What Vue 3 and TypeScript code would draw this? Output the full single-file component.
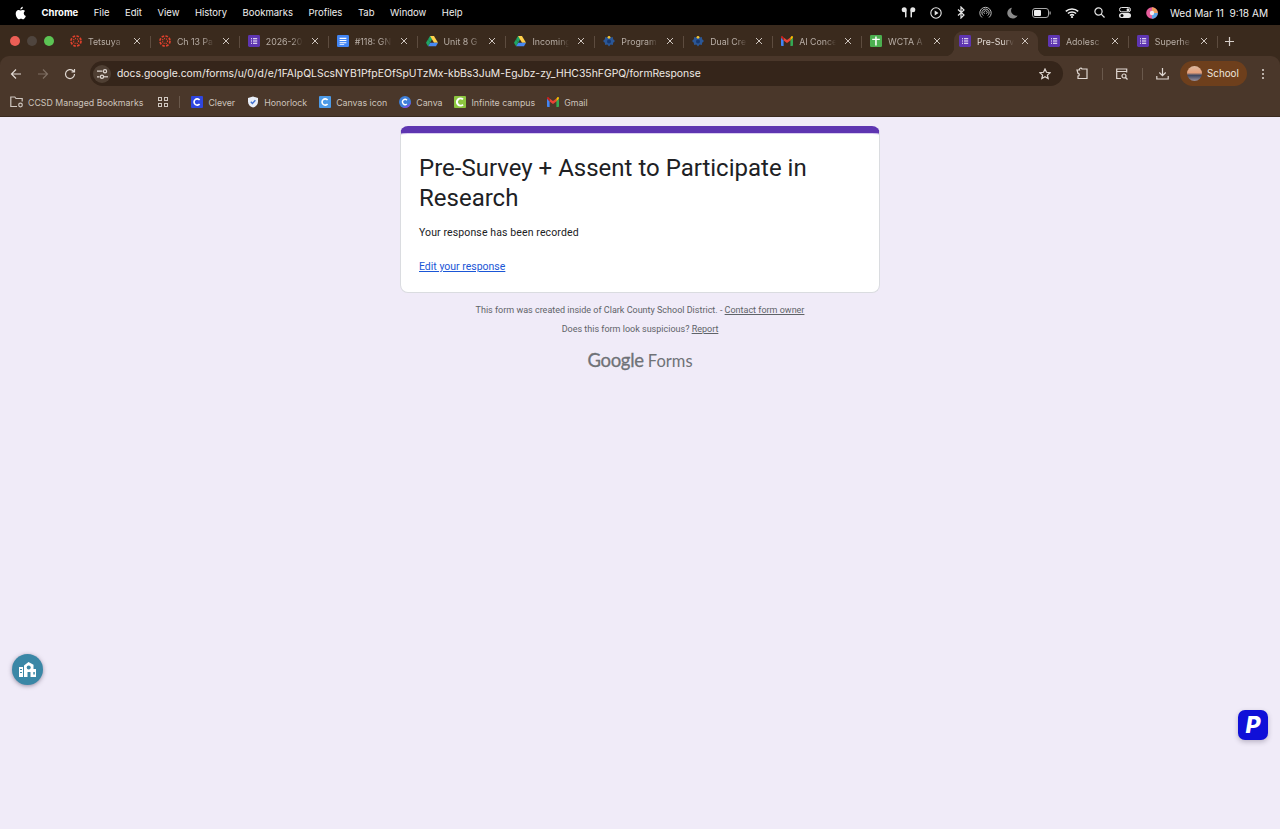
<script setup lang="ts">
interface Tab {
  title: string;
  icon: string;
  active?: boolean;
}

const menus = ['File', 'Edit', 'View', 'History', 'Bookmarks', 'Profiles', 'Tab', 'Window', 'Help'];

const tabs: Tab[] = [
  { title: 'Tetsuya', icon: 'canvas' },
  { title: 'Ch 13 Pa', icon: 'canvas' },
  { title: '2026-20', icon: 'forms' },
  { title: '#118: GN', icon: 'docs' },
  { title: 'Unit 8 G', icon: 'drive' },
  { title: 'Incoming', icon: 'drive' },
  { title: 'Program', icon: 'seal' },
  { title: 'Dual Cre', icon: 'seal' },
  { title: 'AI Conce', icon: 'gmail' },
  { title: 'WCTA A', icon: 'sheets' },
  { title: 'Pre-Surv', icon: 'forms', active: true },
  { title: 'Adolesc', icon: 'forms' },
  { title: 'Superhe', icon: 'forms' },
];

const bookmarks = [
  { title: 'Clever', icon: 'clever' },
  { title: 'Honorlock', icon: 'shield' },
  { title: 'Canvas icon', icon: 'canvasc' },
  { title: 'Canva', icon: 'canva' },
  { title: 'Infinite campus', icon: 'infinite' },
  { title: 'Gmail', icon: 'gmail' },
];
</script>

<template>
  <div class="screen">
    <svg class="sprite" aria-hidden="true">
      <symbol id="canvas" viewBox="0 0 12 12">
        <circle cx="6" cy="6" r="5" fill="none" stroke="#e0402c" stroke-width="1.7" stroke-dasharray="2.6 1.3" />
        <circle cx="6" cy="6" r="2.5" fill="none" stroke="#e0402c" stroke-width="1.3" stroke-dasharray="1.1 1" />
      </symbol>
      <symbol id="forms" viewBox="0 0 12 12">
        <rect width="12" height="12" rx="1.4" fill="#5e35b1" />
        <path d="M3 3.2h1v1H3zM5 3.2h4.2v1H5zM3 5.5h1v1H3zM5 5.5h4.2v1H5zM3 7.8h1v1H3zM5 7.8h4.2v1H5z" fill="#fff" />
      </symbol>
      <symbol id="docs" viewBox="0 0 12 12">
        <rect width="12" height="12" rx="1.2" fill="#4285f4" />
        <path d="M2.6 2.8h6.8v1.1H2.6zM2.6 5h6.8v1.1H2.6zM2.6 7.2h6.8v1.1H2.6zM2.6 9.2h4.6v.9H2.6z" fill="#fff" />
      </symbol>
      <symbol id="drive" viewBox="0 0 12 11">
        <path d="M4 .5h4L4.1 7.2 2.1 3.8z" fill="#1fa463" />
        <path d="M8 .5l4 6.8H8L4.1.5z" fill="#ffd04b" />
        <path d="M12 7.3l-2 3.4H2l2-3.4z" fill="#4688f4" />
        <path d="M0 7.3l2.1-3.5 2 3.5-2.1 3.4z" fill="#1fa463" />
      </symbol>
      <symbol id="seal" viewBox="0 0 12 12">
        <path d="M6 .8l1.6 1.6 2.2-.4.4 2.2L12 6l-1.8 1.8-.4 2.2-2.2-.4L6 11.4l-1.6-1.8-2.2.4-.4-2.2L0 6l1.8-1.8.4-2.2 2.2.4z" fill="#2b5797" />
        <circle cx="6" cy="6.500" r="2" fill="#17386e" />
        <circle cx="6" cy="2.300" r="1.400" fill="#f4c430" />
      </symbol>
      <symbol id="gmail" viewBox="0 0 12 10">
        <path d="M0 1.4v7.8c0 .4.3.8.8.8h1.8V4.6z" fill="#4285f4" />
        <path d="M9.4 4.6V10h1.8c.5 0 .8-.4.8-.8V1.4z" fill="#34a853" />
        <path d="M2.6 4.6L6 7.1l3.4-2.5V1.4L6 3.9 2.6 1.4z" fill="#ea4335" />
        <path d="M0 1.4l2.6 3.2V1.4L1.6.3C.9-.2 0 .4 0 1.4z" fill="#c5221f" />
        <path d="M12 1.4L9.4 4.6V1.4L10.4.3c.7-.5 1.6.1 1.6 1.1z" fill="#fbbc04" />
      </symbol>
      <symbol id="sheets" viewBox="0 0 12 12">
        <rect width="12" height="12" rx="1.2" fill="#4caf50" />
        <path d="M2.2 3.800h3V1.500h1.500v2.300h3.100v1.300H6.700v5.400H5.200V5.100h-3z" fill="#fff" />
      </symbol>
      <symbol id="clever" viewBox="0 0 12 12">
        <rect width="12" height="12" rx="1" fill="#2f46e0" />
        <path d="M8.6 4.1A3.1 3.1 0 1 0 8.6 7.9" fill="none" stroke="#fff" stroke-width="1.6" />
      </symbol>
      <symbol id="shield" viewBox="0 0 12 12">
        <path d="M6 .4l5 1.7v3.6c0 3-2.2 5-5 5.9-2.8-.9-5-2.900-5-5.900V2.100z" fill="#e8edf7" />
        <path d="M3.800 5.800L5.400 7.400l3-3.200" fill="none" stroke="#3d6fd1" stroke-width="1.400" />
      </symbol>
      <symbol id="canvasc" viewBox="0 0 12 12">
        <rect width="12" height="12" rx="1" fill="#4d9be8" />
        <path d="M8.600 4.100A3.100 3.100 0 1 0 8.600 7.900" fill="none" stroke="#fff" stroke-width="1.600" />
      </symbol>
      <symbol id="canva" viewBox="0 0 12 12">
        <circle cx="6" cy="6" r="6" fill="#3f7fd9" />
        <path d="M12 6a6 6 0 0 1-6 6 6 6 0 0 1-3-.8C7 11 10 9 12 6z" fill="#7d4fe0" />
        <path d="M8 4.200A2.600 2.600 0 1 0 7.800 8" fill="none" stroke="#fff" stroke-width="1.300" />
      </symbol>
      <symbol id="infinite" viewBox="0 0 12 12">
        <rect width="12" height="12" rx="1" fill="#8cc63f" />
        <path d="M9 3.400A3.600 3.600 0 1 0 9 8.600" fill="none" stroke="#fff" stroke-width="2" />
      </symbol>
    </svg>

    <header class="menubar">
      <svg class="apple" viewBox="0 0 14 16"><path d="M11.400 8.500c0-1.800 1.500-2.600 1.500-2.700-.8-1.200-2.100-1.400-2.500-1.400-1.100-.1-2.100.6-2.700.6s-1.400-.6-2.300-.6C4.300 4.400 3.200 5.100 2.600 6.200 1.300 8.400 2.300 11.700 3.500 13.500c.6.9 1.300 1.900 2.300 1.800.9 0 1.300-.6 2.400-.6s1.400.6 2.400.6 1.600-.9 2.200-1.800c.7-1 1-2 1-2.100-.1 0-2.400-.9-2.400-2.900zM9.600 3c.5-.6.800-1.500.7-2.300-.7 0-1.600.5-2.100 1.100-.5.5-.9 1.400-.8 2.200.8.100 1.600-.4 2.200-1z" fill="#fff" /></svg>
      <strong class="app-name">Chrome</strong>
      <span v-for="item in menus" :key="item" class="menu-item">{{ item }}</span>
      <div class="status">
        <svg width="15" height="11" viewBox="0 0 15 11" fill="#e6e6e6"><circle cx="3.200" cy="2.700" r="2.500" /><rect x="4" y="3" width="1.500" height="7.500" rx=".7" /><circle cx="11.800" cy="2.700" r="2.500" /><rect x="9.500" y="3" width="1.500" height="7.500" rx=".7" /></svg>
        <svg width="12" height="12" viewBox="0 0 12 12"><circle cx="6" cy="6" r="5.200" fill="none" stroke="#e6e6e6" stroke-width="1.100" /><path d="M4.700 3.600L8.500 6 4.700 8.400z" fill="#e6e6e6" /></svg>
        <svg width="8" height="13" viewBox="0 0 8 13"><path d="M1 3.500l6 5.500-3 3V1l3 3-6 5.500" fill="none" stroke="#e6e6e6" stroke-width="1.200" /></svg>
        <svg width="13" height="13" viewBox="0 0 13 13" fill="none" stroke="#bdbdbd" stroke-width="1"><path d="M3 11.500a5.700 5.700 0 1 1 7 0M4.300 9.500a3.600 3.600 0 1 1 4.400 0M5.600 7.700a1.600 1.600 0 1 1 1.800 0" /></svg>
        <svg width="11" height="12" viewBox="0 0 11 12"><path d="M5 .8a5.400 5.400 0 1 0 5.600 7.600A5 5 0 0 1 5 .8z" fill="#8a8a8a" /></svg>
        <svg width="19" height="10" viewBox="0 0 19 10"><rect x=".5" y=".5" width="16" height="9" rx="2.500" fill="none" stroke="#a8a8a8" /><rect x="2" y="2" width="7" height="6" rx="1" fill="#f0f0f0" /><rect x="17.500" y="3.500" width="1.200" height="3" fill="#a8a8a8" /></svg>
        <svg width="14" height="10" viewBox="0 0 14 10" fill="none" stroke="#f0f0f0" stroke-width="1.500"><path d="M.8 3.400a9 9 0 0 1 12.400 0M2.900 5.500a6 6 0 0 1 8.200 0M5 7.500a3 3 0 0 1 4 0" /><circle cx="7" cy="9.200" r=".4" /></svg>
        <svg width="11" height="11" viewBox="0 0 11 11" fill="none" stroke="#e6e6e6" stroke-width="1.200"><circle cx="4.500" cy="4.500" r="3.600" /><path d="M7.200 7.200L10.500 10.500" /></svg>
        <svg width="12" height="11" viewBox="0 0 12 11"><rect x=".5" y=".5" width="11" height="4.300" rx="2.100" fill="none" stroke="#e6e6e6" /><circle cx="9" cy="2.650" r="1.500" fill="#e6e6e6" /><rect y="6" width="12" height="5" rx="2.500" fill="#e6e6e6" /><circle cx="3" cy="8.500" r="1.500" fill="#000" /></svg>
        <svg width="12" height="12" viewBox="0 0 12 12"><circle cx="6" cy="6" r="5.800" fill="#e85d9c" /><path d="M6 .2a5.800 5.800 0 0 1 5.800 5.800H6z" fill="#f0a35e" /><path d="M11.800 6A5.800 5.800 0 0 1 6 11.800V6z" fill="#5aa6e8" /><circle cx="6" cy="6" r="2.200" fill="#f5e8f0" /></svg>
        <span class="clock">Wed Mar 11&nbsp; 9:18 AM</span>
      </div>
    </header>

    <div class="tabstrip">
      <div class="lights">
        <i class="light red"></i>
        <i class="light gray"></i>
        <i class="light green"></i>
      </div>
      <div class="tabs">
        <div v-for="tab in tabs" :key="tab.title" class="tab" :class="{ 'is-active': tab.active }">
          <svg class="favicon"><use :href="`#${tab.icon}`" /></svg>
          <span class="tab-title">{{ tab.title }}</span>
          <svg class="tab-close" viewBox="0 0 8 8"><path d="M1 1l6 6M7 1L1 7" /></svg>
        </div>
      </div>
      <svg class="new-tab" viewBox="0 0 9 9"><path d="M4.500 0v9M0 4.500h9" /></svg>
    </div>

    <div class="toolbar">
      <svg class="tool" width="12" height="12" viewBox="0 0 12 12"><path d="M11 6H1.500M6 1.500L1.500 6 6 10.500" /></svg>
      <svg class="tool is-off" width="12" height="12" viewBox="0 0 12 12"><path d="M1 6h9.500M6 1.500L10.500 6 6 10.500" /></svg>
      <svg class="tool" width="12" height="12" viewBox="0 0 12 12"><path d="M10.500 6A4.500 4.500 0 1 1 9 2.700L10.500 4M10.500 1v3h-3" /></svg>
      <div class="address">
        <span class="tune">
          <svg class="tool" width="11" height="10" viewBox="0 0 11 10"><path d="M0 2.200h5.500M0 7.800h2.500" /><circle cx="8" cy="2.200" r="1.600" /><circle cx="5" cy="7.800" r="1.600" /><path d="M7 7.800h4" /></svg>
        </span>
        <span class="url">docs.google.com/forms/u/0/d/e/1FAIpQLScsNYB1PfpEOfSpUTzMx-kbBs3JuM-EgJbz-zy_HHC35hFGPQ/formResponse</span>
        <svg class="tool star" width="12" height="12" viewBox="0 0 12 12"><path d="M6 1l1.500 3.300 3.600.4-2.700 2.400.8 3.500L6 8.800l-3.200 1.800.8-3.500L.9 4.700l3.600-.4z" /></svg>
      </div>
      <svg class="tool ext" width="13" height="13" viewBox="0 0 13 13"><path d="M1 3h2.500a1.300 1.300 0 0 1 2.500-1h5v9.500H2V9a1.300 1.300 0 0 0 0-2.600z" /></svg>
      <i class="divider"></i>
      <svg class="tool" width="13" height="12" viewBox="0 0 13 12"><path d="M5 10.500H.7V1h10v3.500M.7 3.500h10" /><circle cx="8" cy="8" r="2" /><path d="M9.500 9.500l2 2" /></svg>
      <i class="divider"></i>
      <svg class="tool" width="13" height="13" viewBox="0 0 13 13"><path d="M6.500 1v7.500M3.300 5.500l3.200 3.200 3.200-3.200M.8 9v3h11.400V9" /></svg>
      <div class="profile">
        <span class="avatar"></span>
        <span>School</span>
      </div>
      <span class="kebab"><i></i><i></i><i></i></span>
    </div>

    <div class="bookmarks">
      <svg class="tool folder" width="14" height="12" viewBox="0 0 14 12"><path d="M7 10.500H.8V1h4l1.200 1.500h6.200v3" /><circle cx="10.500" cy="9" r="1.800" /></svg>
      <span class="bm-label managed">CCSD Managed Bookmarks</span>
      <span class="apps"><i></i><i></i><i></i><i></i></span>
      <i class="divider bm-divider"></i>
      <div v-for="mark in bookmarks" :key="mark.title" class="bm">
        <svg class="favicon"><use :href="`#${mark.icon}`" /></svg>
        <span class="bm-label">{{ mark.title }}</span>
      </div>
    </div>

    <main class="page">
      <section class="card">
        <h1>Pre-Survey + Assent to Participate in Research</h1>
        <p class="recorded">Your response has been recorded</p>
        <a class="edit-link">Edit your response</a>
      </section>
      <p class="foot first">This form was created inside of Clark County School District. - <u>Contact form owner</u></p>
      <p class="foot">Does this form look suspicious? <u>Report</u></p>
      <div class="wordmark"><span class="wm-google">Google</span> <span class="wm-forms">Forms</span></div>

      <div class="float-school">
        <svg width="18" height="17" viewBox="0 0 18 17" fill="#fff"><path d="M9.500 1l5 2.800V8h2.500v8H5V4.500z" /><path d="M0 6h4v10H0z" /><circle cx="9.700" cy="6.500" r="2" fill="#3a87a6" /><path d="M8.500 11h3v5h-3zM14.300 11h1.500v2.500h-1.500zM1 8h2v1H1zM1 11h2v1H1z" fill="#3a87a6" /></svg>
      </div>
      <div class="float-p">P</div>
    </main>
  </div>
</template>

<style>
html,
body {
  margin: 0;
  background: #f0ebf8;
}
</style>

<style scoped>
.screen {
  width: 1280px;
  height: 829px;
  display: flex;
  flex-direction: column;
  overflow: hidden;
  background: #3a2a1d;
  font-family: Inter, "Liberation Sans", sans-serif;
}

.sprite {
  position: absolute;
  width: 0;
  height: 0;
}

.menubar {
  height: 25px;
  flex: none;
  display: flex;
  align-items: center;
  gap: 15.500px;
  padding: 0 12px 0 14px;
  background: #000;
  color: #f0f0f0;
  font-size: 9.500px;
}

.apple {
  width: 12px;
  height: 14px;
}

.app-name {
  color: #fff;
  font-weight: 700;
}

.status {
  margin-left: auto;
  display: flex;
  align-items: center;
  gap: 14.400px;
}

.clock {
  margin-left: -2px;
  font-size: 10.100px;
  white-space: nowrap;
}

.tabstrip {
  height: 31px;
  flex: none;
  display: flex;
  align-items: flex-end;
  background: #3a2a1d;
}

.lights {
  width: 62px;
  height: 25px;
  flex: none;
  display: flex;
  align-items: center;
  gap: 7px;
  padding: 0 0 5px 10px;
  box-sizing: border-box;
}

.light {
  width: 10px;
  height: 10px;
  border-radius: 50%;
}

.red {
  background: #ec5f56;
}

.gray {
  background: #4f453e;
}

.green {
  background: #5cc454;
}

.tabs {
  display: flex;
}

.tab {
  position: relative;
  width: 88.900px;
  height: 25px;
  box-sizing: border-box;
  display: flex;
  align-items: center;
  gap: 6px;
  padding: 0 10px 5px 8px;
  color: #b8aea6;
  font-size: 8.800px;
}

.tab::after {
  content: "";
  position: absolute;
  right: 0;
  top: 5px;
  width: 1px;
  height: 12px;
  background: #5d4c3f;
}

.tab:nth-child(10)::after {
  display: none;
}

.tab.is-active {
  background: #4a372a;
  border-radius: 9px 9px 0 0;
  color: #e4dcd6;
  width: 84px;
  margin: 0 2px 0 3px;
  padding: 0 9px 5px 5px;
}

.tab.is-active::before,
.tab.is-active::after {
  content: "";
  position: absolute;
  top: auto;
  bottom: 0;
  width: 9px;
  height: 9px;
}

.tab.is-active::before {
  left: -9px;
  background: radial-gradient(circle at 0 0, transparent 9px, #4a372a 9.500px);
}

.tab.is-active::after {
  right: -9px;
  background: radial-gradient(circle at 100% 0, transparent 9px, #4a372a 9.500px);
}

.favicon {
  width: 12px;
  height: 12px;
  flex: none;
}

.tab-title {
  width: 37px;
  flex: none;
  overflow: hidden;
  white-space: nowrap;
  -webkit-mask-image: linear-gradient(90deg, #000 70%, transparent);
  mask-image: linear-gradient(90deg, #000 70%, transparent);
}

.tab-close {
  width: 8px;
  height: 8px;
  margin-left: auto;
  fill: none;
  stroke: #cfc6bf;
  stroke-width: 1;
}

.new-tab {
  width: 9px;
  height: 9px;
  margin: 0 0 10px 7px;
  fill: none;
  stroke: #d8d0ca;
  stroke-width: 1.200;
}

.toolbar {
  height: 33px;
  flex: none;
  box-sizing: border-box;
  display: flex;
  align-items: center;
  padding: 2px 13px 0 10px;
  background: #4a372a;
  border-radius: 9px 9px 0 0;
}

.tool {
  flex: none;
  fill: none;
  stroke: #e0d8d2;
  stroke-width: 1.200;
}

.tool.is-off {
  stroke: #7f6f63;
  margin-left: 15px;
}

.toolbar > .tool:nth-child(3) {
  margin-left: 15px;
}

.address {
  width: 973px;
  height: 25px;
  flex: none;
  box-sizing: border-box;
  margin-left: 14px;
  padding: 0 12px 0 3px;
  display: flex;
  align-items: center;
  background: #35251a;
  border-radius: 13px;
}

.tune {
  width: 18px;
  height: 18px;
  display: flex;
  align-items: center;
  justify-content: center;
  background: #4f3f33;
  border-radius: 50%;
}

.url {
  margin-left: 6px;
  color: #efe9e4;
  font-size: 10.380px;
  white-space: nowrap;
}

.star {
  margin-left: auto;
}

.ext {
  margin-left: 13px;
}

.divider {
  width: 1px;
  height: 12px;
  margin: 0 13px;
  background: #6a594c;
}

.profile {
  width: 67px;
  height: 25px;
  box-sizing: border-box;
  margin-left: 11px;
  padding-left: 7px;
  display: flex;
  align-items: center;
  gap: 5px;
  background: #6e3f1c;
  border-radius: 13px;
  color: #efe6df;
  font-size: 9.800px;
}

.avatar {
  width: 15px;
  height: 15px;
  border-radius: 50%;
  background: linear-gradient(180deg, #d9b8a0 0%, #e7a07a 45%, #3d4660 62%, #9a8f9a 100%);
}

.kebab {
  margin-left: 15px;
  display: flex;
  flex-direction: column;
  gap: 2px;
}

.kebab i {
  width: 2px;
  height: 2px;
  background: #e0d8d2;
  border-radius: 50%;
}

.bookmarks {
  height: 28px;
  flex: none;
  display: flex;
  align-items: center;
  gap: 12px;
  padding: 0 0 1px 10px;
  box-sizing: border-box;
  background: #4a372a;
  border-bottom: 1px solid #3a2a1f;
}

.folder {
  stroke: #d0c7c0;
}

.managed {
  margin-left: -8px;
}

.bm {
  display: flex;
  align-items: center;
  gap: 5px;
}

.bm-label {
  color: #cdc3bc;
  font-size: 8.800px;
  white-space: nowrap;
}

.apps {
  display: grid;
  grid-template-columns: 4px 4px;
  gap: 2px;
  margin-left: 3px;
}

.apps i {
  width: 4px;
  height: 4px;
  box-sizing: border-box;
  border: 1px solid #d0c7c0;
}

.bm-divider {
  margin: 0 -1px 0 -1px;
}

.page {
  position: relative;
  flex: 1;
  display: flex;
  flex-direction: column;
  align-items: center;
  padding-top: 9px;
  background: #f0ebf8;
  font-family: Roboto, "Liberation Sans", sans-serif;
}

.card {
  width: 480px;
  height: 167px;
  box-sizing: border-box;
  padding: 20px 18px 0;
  background: #fff;
  border: 1px solid #dadce0;
  border-top: 7px solid #5e35b1;
  border-radius: 8px;
  box-shadow: inset 0 1px 0 #d9cdf0;
}

.card h1 {
  margin: 0;
  color: #202124;
  font-size: 24px;
  font-weight: 400;
  line-height: 30px;
}

.recorded {
  margin: 12px 0 0;
  color: #202124;
  font-size: 10.500px;
  line-height: 16px;
  letter-spacing: 0.120px;
}

.edit-link {
  display: block;
  margin-top: 18px;
  color: #1a56d6;
  font-size: 10.500px;
  line-height: 16px;
  text-decoration: underline;
}

.foot {
  margin: 7px 0 0;
  color: #5f6368;
  font-size: 9px;
  line-height: 12px;
}

.foot.first {
  margin-top: 11px;
}

.wordmark {
  margin-top: 14px;
  color: #6f7277;
  line-height: 22px;
  font-family: Lato, Roboto, sans-serif;
}

.wm-google {
  font-size: 18.500px;
  letter-spacing: -0.300px;
  -webkit-text-stroke: 0.300px #6f7277;
}

.wm-forms {
  font-size: 16.500px;
}

.float-school {
  position: absolute;
  left: 12px;
  top: 537px;
  width: 31px;
  height: 31px;
  display: flex;
  align-items: center;
  justify-content: center;
  background: #3a87a6;
  border-radius: 50%;
  box-shadow: 0 1px 4px rgba(60, 50, 80, 0.5);
}

.float-p {
  position: absolute;
  left: 1238px;
  top: 593px;
  width: 30px;
  height: 30px;
  display: flex;
  align-items: center;
  justify-content: center;
  background: #1010d8;
  border-radius: 7px;
  box-shadow: 0 2px 5px rgba(60, 50, 80, 0.3);
  color: #fff;
  font-family: Inter, sans-serif;
  font-size: 23px;
  font-style: italic;
  font-weight: 800;
}
</style>
